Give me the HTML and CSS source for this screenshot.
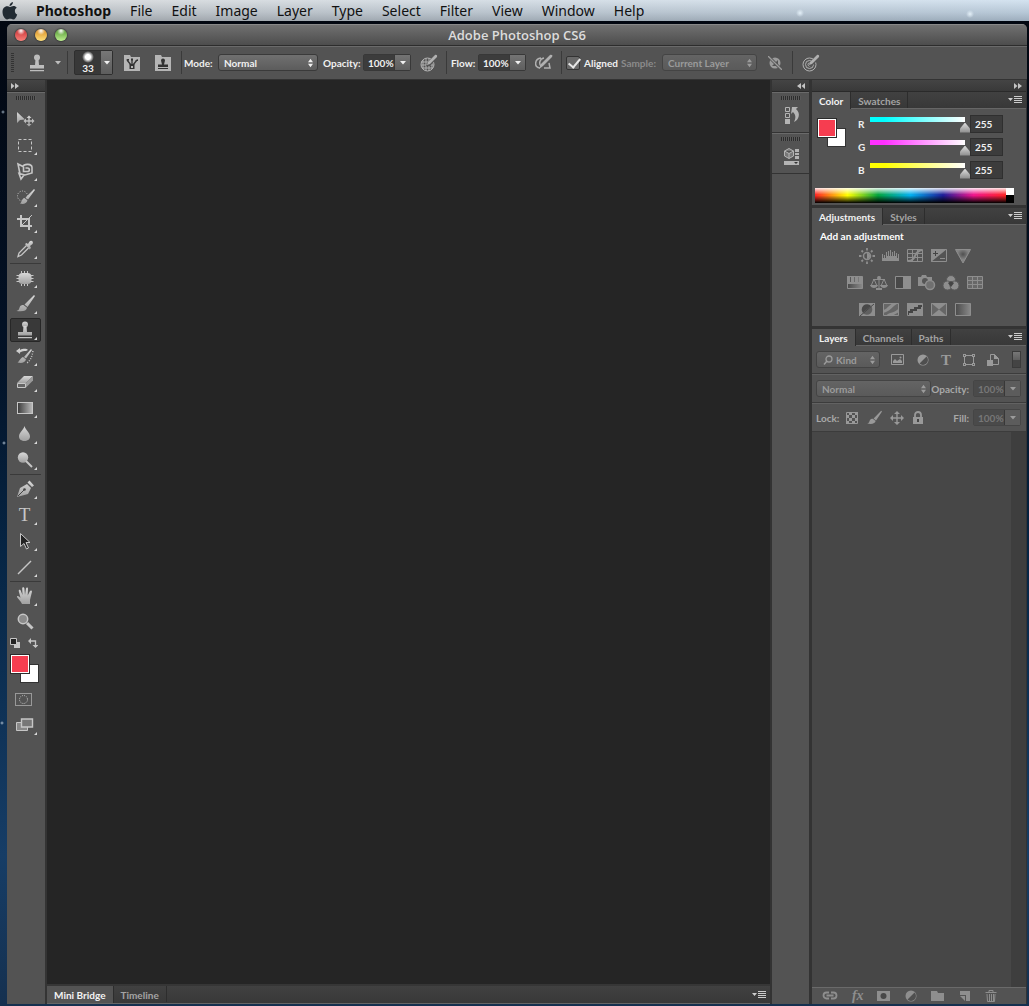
FILE: index.html
```html
<!DOCTYPE html>
<html lang="en">
<head>
    <meta charset="UTF-8">
    <meta name="viewport" content="width=device-width, initial-scale=1.0">
    <title>Adobe Photoshop CS6</title>
    <link rel="stylesheet" href="styles.css">
</head>
<body>
    <!-- shared icons -->
    <svg class="defs" width="0" height="0" aria-hidden="true">
        <defs>
            <linearGradient id="gray" x1="0" y1="0" x2="0" y2="1"><stop offset="0" stop-color="#d8d8d8"/><stop offset="1" stop-color="#a0a0a0"/></linearGradient>
            <linearGradient id="fade" x1="0" x2="1"><stop offset="0" stop-color="#3a3a3a"/><stop offset="1" stop-color="#bbb"/></linearGradient>
            <linearGradient id="dim" x1="0" x2="1"><stop offset="0" stop-color="#4a4a4a"/><stop offset="1" stop-color="#8a8a8a"/></linearGradient>
            <radialGradient id="glow" cx=".5" cy=".35" r=".4"><stop offset="0" stop-color="#505050"/><stop offset="1" stop-color="#858585"/></radialGradient>
            <symbol id="stamp" viewBox="0 0 20 20"><circle cx="10" cy="4.500" r="3"/><path d="M8.500 6h3l.5 6h5v3.500H3V12h5z"/><path d="M3 17h14v1.300H3z"/></symbol>
            <symbol id="brush" viewBox="0 0 20 20"><path d="M19 1l1 1-7.500 11-3-2.500zM8.500 11l3.500 2.800c-.5 3-4 4.200-10.500 3.200 3-1 2.500-2.500 3.500-4.500.8-1.200 2-1.700 3.500-1.500z"/></symbol>
            <symbol id="updown" viewBox="0 0 6 10"><path d="M3 0l3 4H0zM3 10l3-4H0z"/></symbol>
            <symbol id="down" viewBox="0 0 6 4"><path d="M0 0h6L3 3.500z"/></symbol>
            <symbol id="menu" viewBox="0 0 14 8"><path d="M0 2h5L2.500 5zM6 0h8v1H6zM6 2h8v1H6zM6 4h8v1H6zM6 6h8v1H6z"/></symbol>
            <symbol id="forward" viewBox="0 0 8 6"><path d="M0 0l3.500 3L0 6zM4 0l4 3-4 3z"/></symbol>
            <symbol id="back" viewBox="0 0 8 6"><path d="M8 0L4.500 3 8 6zM4 0L0 3l4 3z"/></symbol>
            <symbol id="target" viewBox="0 0 18 18"><g fill="none" stroke="currentColor"><circle cx="7.500" cy="10.500" r="6.500"/><circle cx="7.500" cy="10.500" r="4"/><circle cx="7.500" cy="10.500" r="1.500"/></g><path fill="#535353" d="M7 12l1-4 7-7 3 3-8 8z"/><path d="M7 11l1-3 7-7c1.500-.5 2.500.5 2 2l-7 7z"/></symbol>
            <symbol id="half" viewBox="0 0 12 12"><circle cx="6" cy="6" r="5.500"/><path fill="#4f4f4f" d="M9.500 2.500A4.800 4.800 0 012.500 9.500z"/></symbol>
        </defs>
    </svg>

    <nav class="menubar">
        <a href="#" class="apple" aria-label="Apple"><svg width="16" height="18" viewBox="0 0 16 18"><path d="M11 0c0 2-1.500 4-3.500 4C7.300 2.200 9 .3 11 0zM8 5c1 0 2-1 3.500-1 1.300 0 2.500.6 3.200 1.700-2.700 1.700-2.300 5.500.5 6.700C14.300 15 13 17.500 11.300 17.500c-1.200 0-1.700-.7-3.100-.7-1.500 0-2 .7-3.100.7C3 17.500.5 13.500.5 10 .5 6.500 2.700 4.300 5 4.300c1.300 0 2.200.7 3 .7z"/></svg></a>
        <a href="#" class="app">Photoshop</a>
        <a href="#">File</a>
        <a href="#">Edit</a>
        <a href="#">Image</a>
        <a href="#">Layer</a>
        <a href="#">Type</a>
        <a href="#">Select</a>
        <a href="#">Filter</a>
        <a href="#">View</a>
        <a href="#">Window</a>
        <a href="#">Help</a>
    </nav>

    <div class="window">
        <header class="titlebar">
            <div class="lights">
                <button class="light red" aria-label="Close"></button>
                <button class="light yellow" aria-label="Minimize"></button>
                <button class="light green" aria-label="Zoom"></button>
            </div>
            <h1>Adobe Photoshop CS6</h1>
        </header>

        <div class="options">
            <span class="grip-v"></span>
            <button class="tool-preset" aria-label="Tool preset"><svg width="20" height="20"><use href="#stamp"/></svg><svg width="6" height="4"><use href="#down"/></svg></button>
            <span class="divider"></span>
            <button class="brush-size"><span class="brush-preview"><i></i>33</span><span class="drop"><svg width="6" height="4"><use href="#down"/></svg></span></button>
            <button class="folder" aria-label="Brush panel"><svg width="16" height="16" viewBox="0 0 16 16"><path fill="#b5b5b5" d="M0 0h6l1 2h9v14H0z"/><path fill="none" stroke="#333" stroke-width="1.300" d="M3 5l4 5M8 4v6M13 5L9 10"/><path fill="#333" d="M2 4h3v2zM7 3.500h2v2H7zM11 6l3-2v2zM5.500 9h5v5h-5z"/><path fill="#b5b5b5" d="M7 11h2v2H7z"/></svg></button>
            <button class="folder" aria-label="Clone source panel"><svg width="16" height="16" viewBox="0 0 16 16"><path fill="#b5b5b5" d="M0 0h6l1 2h9v14H0z"/><path fill="#333" d="M6 5.500a2 2 0 014 0L9 9.500h4V12H3V9.500h4zM3 13h10v1H3z"/></svg></button>
            <span class="divider"></span>
            <label class="mode-label" for="mode">Mode:</label>
            <span class="select mode"><select id="mode"><option>Normal</option></select><svg width="6" height="10"><use href="#updown"/></svg></span>
            <label class="opacity-label" for="opacity">Opacity:</label>
            <span class="combo"><input id="opacity" type="text" value="100%"><button aria-label="Opacity slider"><svg width="6" height="4"><use href="#down"/></svg></button></span>
            <button class="pressure" aria-label="Pressure for opacity"><svg width="18" height="18" viewBox="0 0 18 18"><g fill="none" stroke="currentColor"><circle cx="7.500" cy="10.500" r="6.500"/><path d="M3 6v9M6 4v13M9 4v13M12 7v8M1 8h12M1 11h13M2 14h11"/></g><path fill="#535353" d="M6 12l2-4 7-7 3 2-8 9z"/><path d="M7 11l1-3 7-7c1.500-.5 2.500.5 2 2l-7 7z"/></svg></button>
            <span class="divider"></span>
            <label class="flow-label" for="flow">Flow:</label>
            <span class="combo"><input id="flow" type="text" value="100%"><button aria-label="Flow slider"><svg width="6" height="4"><use href="#down"/></svg></button></span>
            <button class="pressure" aria-label="Airbrush"><svg width="18" height="18" viewBox="0 0 18 18"><path fill="none" stroke="currentColor" stroke-width="1.500" d="M6 4C-1 5-1 14 5 14M9 4C4 5 4 10 6 12M14 9l1 5H9"/><path d="M4 15l2-5 9-9c2-.5 3 .5 2 2l-9 9z"/></svg></button>
            <span class="divider"></span>
            <label class="aligned"><input type="checkbox" checked>Aligned</label>
            <label class="sample-label off" for="sample">Sample:</label>
            <span class="select sample off"><select id="sample"><option>Current Layer</option></select><svg width="6" height="10"><use href="#updown"/></svg></span>
            <button class="ignore off" aria-label="Ignore adjustment layers"><svg width="14" height="14" viewBox="0 0 14 14"><circle cx="7" cy="7" r="5.500"/><path fill="#535353" d="M4 10l6-6v6z"/><path stroke="#535353" stroke-width="3" d="M1 1l12 12"/><path stroke="currentColor" stroke-width="1.300" d="M0 0l14 14"/></svg></button>
            <span class="divider"></span>
            <button class="pressure" aria-label="Pressure for size"><svg width="18" height="18"><use href="#target"/></svg></button>
        </div>

        <div class="workspace">
            <aside class="toolbox">
                <button class="collapse" aria-label="Expand tools"><svg width="8" height="6"><use href="#forward"/></svg></button>
                <div class="tools">
                    <span class="grip"></span>
                    <button class="tool single" aria-label="Move"><svg width="20" height="20" viewBox="0 0 20 20"><path d="M2 3v11l3-3 5-.5z"/><path d="M14 6.500l2.500 2.500H14.700v2.300H17V9.500l2.500 2.500-2.500 2.500v-1.800h-2.300V15h1.800L14 17.500 11.500 15h1.800v-2.300H11v1.800L8.500 12 11 9.500v1.800h2.300V9h-1.800z"/></svg></button>
                    <button class="tool" aria-label="Marquee"><svg width="20" height="20" viewBox="0 0 20 20"><rect x="3.500" y="4.500" width="13" height="12" fill="none" stroke="currentColor" stroke-dasharray="3 2"/></svg></button>
                    <button class="tool" aria-label="Lasso"><svg width="20" height="20" viewBox="0 0 20 20"><path fill="none" stroke="currentColor" stroke-width="1.600" d="M5 13L3 3l5 2.500c1-3 9-3 9 1V12l-7 2-6-1.500 2 5.500 3-4M8.500 6v4.500h4c2.500 0 2.500-3.500 0-3.500h-2"/></svg></button>
                    <button class="tool" aria-label="Quick selection"><svg width="20" height="20" viewBox="0 0 20 20"><circle cx="7.500" cy="9" r="5" fill="none" stroke="currentColor" stroke-dasharray="1 1.500"/><path d="M19 2l1 1-7 9.500-2.500-2zM9.500 11l3 2.500c-1 3-4 4-7.500 3 2-1 1.500-5 4.500-5.500z"/></svg></button>
                    <button class="tool" aria-label="Crop"><svg width="20" height="20" viewBox="0 0 20 20"><path fill="none" stroke="currentColor" stroke-width="2" d="M2 6h12v11M6 2v11h11"/><path stroke="currentColor" d="M6 13L17 2"/></svg></button>
                    <button class="tool" aria-label="Eyedropper"><svg width="20" height="20" viewBox="0 0 20 20"><path d="M10 5l1.500-1L13 5l1.500-2.500c2-2 4.500.5 3 2.500L15 7l1 2-1.500 1.500z"/><path fill="none" stroke="currentColor" stroke-width="1.300" d="M11.500 6.500L4 14l-1 3.500L6.500 16 13.500 9"/></svg></button>
                    <hr>
                    <button class="tool" aria-label="Healing brush"><svg width="20" height="20" viewBox="0 0 20 20"><rect x="3.500" y="5" width="13" height="11" rx="4"/><path stroke="currentColor" stroke-dasharray="2 11 2" d="M6.500 3v15M9.500 3v15M12.500 3v15"/><path stroke="currentColor" d="M1.500 7.500h3M1.500 10.500h3M1.500 13.500h3M15.500 7.500h3M15.500 10.500h3M15.500 13.500h3"/></svg></button>
                    <button class="tool" aria-label="Brush"><svg width="20" height="20"><use href="#brush"/></svg></button>
                    <button class="tool active" aria-label="Clone stamp"><svg width="20" height="20"><use href="#stamp"/></svg></button>
                    <button class="tool" aria-label="History brush"><svg width="20" height="20" viewBox="0 0 20 20"><path d="M16 3l1 1-6 8.500-2-1.500zM8 11l3 2.500c-1 3-4 4-8.500 3 2-1 2.500-4.500 5.500-5.500zM1 5l4-3v2c4-2 7-1 8 0l-2 1C9 5 7 5 5 6.500V8z"/><path fill="none" stroke="currentColor" stroke-width="1.500" stroke-dasharray="1 1.500" d="M18 5c-1 5-2 9-6 12"/></svg></button>
                    <button class="tool" aria-label="Eraser"><svg width="20" height="20" viewBox="0 0 20 20"><path d="M9 4h9l-7 7H2z"/><path fill="#999" d="M18 4v4.500l-7 7V11z"/><path fill="#656565" stroke="currentColor" d="M2.500 11.500h8v4h-8z"/></svg></button>
                    <button class="tool" aria-label="Gradient"><svg width="20" height="20" viewBox="0 0 20 20"><rect x="2.500" y="4.500" width="15" height="11" fill="url(#fade)" stroke="currentColor"/></svg></button>
                    <button class="tool" aria-label="Blur"><svg width="20" height="20" viewBox="0 0 20 20"><path d="M9.500 2c1 4 5.500 6.500 5.500 10.500 0 6-11 6-11 0C4 8.500 8.500 6 9.500 2z"/></svg></button>
                    <button class="tool" aria-label="Dodge"><svg width="20" height="20" viewBox="0 0 20 20"><circle cx="8" cy="7.500" r="5.200"/><path stroke="currentColor" stroke-width="2" d="M11 11l6 6"/></svg></button>
                    <hr>
                    <button class="tool" aria-label="Pen"><svg width="20" height="20" viewBox="0 0 20 20"><path d="M2 18L5 9l7-4 4 4-3 6zM12.500 3.500L14.500 1.500l4.500 5-2 1.500z"/><path stroke="#444" d="M3 17l6-6"/><circle cx="9.500" cy="10.500" r="1.300" fill="#444"/></svg></button>
                    <button class="tool type" aria-label="Type">T</button>
                    <button class="tool" aria-label="Path selection"><svg width="20" height="20" viewBox="0 0 20 20"><path fill="#222" stroke="currentColor" d="M5.500 2.500v13l3.500-3 2.500 5.500 2-1-2.500-5.500h4z"/></svg></button>
                    <button class="tool" aria-label="Line"><svg width="20" height="20" viewBox="0 0 20 20"><path stroke="currentColor" stroke-width="1.500" d="M3 17L16 4"/></svg></button>
                    <hr>
                    <button class="tool" aria-label="Hand"><svg width="20" height="20" viewBox="0 0 20 20"><path d="M7 18c-1-3-4-5-5-7 0-2 2-1 3.500.8L3.700 5c0-1.700 1.800-1.700 2.200 0L7.500 9 7.200 2.500c0-1.600 2-1.600 2.200 0L10 9l1-6.500c.4-1.400 2-1.200 2 .3L12.700 9.500 15 5c.8-1.200 2.400-.4 1.900 1L15 14v4z"/></svg></button>
                    <button class="tool single" aria-label="Zoom"><svg width="20" height="20" viewBox="0 0 20 20"><circle cx="8" cy="7" r="4.700" fill="#8b8b8b" stroke="currentColor" stroke-width="1.500"/><path stroke="currentColor" stroke-width="3" d="M12 11l5.500 5.500"/></svg></button>
                    <div class="swap">
                        <button aria-label="Default colors"><svg width="10" height="10" viewBox="0 0 10 10"><path d="M4 4h6v6H4z"/><path fill="#222" stroke="currentColor" d="M.5.500h6v6h-6z"/></svg></button>
                        <button aria-label="Swap colors"><svg width="10" height="10" viewBox="0 0 10 10"><path d="M0 3l3-3v6zM4.500 7h6l-3 3z"/><path fill="none" stroke="currentColor" stroke-width="1.300" d="M2 3h5.500v5"/></svg></button>
                    </div>
                    <div class="colors"><button class="fore" aria-label="Foreground color"></button><button class="back" aria-label="Background color"></button></div>
                    <button class="tool single mask" aria-label="Quick mask"><svg width="18" height="14" viewBox="0 0 18 14"><rect x=".5" y=".5" width="16" height="12" fill="none" stroke="#999"/><circle cx="8.500" cy="6.500" r="4" fill="none" stroke="currentColor" stroke-dasharray="1 1.100"/></svg></button>
                    <button class="tool" aria-label="Screen mode"><svg width="20" height="20" viewBox="0 0 20 20"><path fill="#888" stroke="currentColor" d="M1.500 7.500h11v8h-11z"/><path fill="#777" stroke="currentColor" stroke-width="1.400" d="M6.500 4h11v8h-11z"/></svg></button>
                </div>
            </aside>

            <main class="document">
                <div class="canvas"></div>
                <div class="tabs">
                    <button class="tab on">Mini Bridge</button>
                    <button class="tab">Timeline</button>
                    <button class="panel-menu" aria-label="Panel menu"><svg width="14" height="8"><use href="#menu"/></svg></button>
                </div>
            </main>

            <aside class="dock">
                <button class="collapse end" aria-label="Expand panels"><svg width="8" height="6"><use href="#back"/></svg></button>
                <div class="dock-item"><span class="grip"></span><button aria-label="History"><svg width="18" height="20" viewBox="0 0 18 20"><path fill="none" stroke="currentColor" d="M2.500 2.500h4v4h-4zM2.500 8.500h4v4h-4z"/><path d="M2 14h5v5H2zM9 2h6l-2 2c5 4 3 11-2 13 2-4 2-7-1-10L8 9z"/></svg></button></div>
                <div class="dock-item"><span class="grip"></span><button aria-label="Properties"><svg width="18" height="20" viewBox="0 0 18 20"><path fill="#777" stroke="currentColor" d="M1.500 5l4.500-2.500L10.500 5v5L6 12.500 1.500 10zM1.500 5L6 7.500 10.500 5M6 7.500v5"/><path d="M12 3h4v3h-4zM12 7h4v2h-4zM12 10h4v3h-4zM1 15h15v4H1z"/><path fill="#333" d="M11 16h4l-2 2z"/></svg></button></div>
            </aside>

            <aside class="panels">
                <button class="collapse end" aria-label="Collapse panels"><svg width="8" height="6"><use href="#forward"/></svg></button>

                <section class="panel">
                    <div class="tabs">
                        <button class="tab on">Color</button>
                        <button class="tab">Swatches</button>
                        <button class="panel-menu" aria-label="Panel menu"><svg width="14" height="8"><use href="#menu"/></svg></button>
                    </div>
                    <div class="color">
                        <div class="mixer">
                            <div class="colors"><button class="fore" aria-label="Foreground color"></button><button class="back" aria-label="Background color"></button></div>
                            <div class="channels">
                                <div class="channel"><label for="r">R</label><input id="r" class="red-track" type="range" max="255" value="255"><input type="text" value="255" aria-label="Red"></div>
                                <div class="channel"><label for="g">G</label><input id="g" class="green-track" type="range" max="255" value="255"><input type="text" value="255" aria-label="Green"></div>
                                <div class="channel"><label for="b">B</label><input id="b" class="blue-track" type="range" max="255" value="255"><input type="text" value="255" aria-label="Blue"></div>
                            </div>
                        </div>
                        <div class="spectrum"><span class="rainbow"></span><span class="bw"></span></div>
                    </div>
                </section>

                <section class="panel">
                    <div class="tabs">
                        <button class="tab on">Adjustments</button>
                        <button class="tab">Styles</button>
                        <button class="panel-menu" aria-label="Panel menu"><svg width="14" height="8"><use href="#menu"/></svg></button>
                    </div>
                    <div class="adjustments">
                        <h2>Add an adjustment</h2>
                        <div class="adj-row">
                            <button aria-label="Brightness"><svg width="18" height="16" viewBox="0 0 18 16"><circle cx="9" cy="8" r="3.500" fill="none" stroke="currentColor" stroke-width="1.500"/><path d="M9 5a3 3 0 010 6z"/><path stroke="currentColor" stroke-width="1.800" d="M9 0v2.500M9 13.500V16M1 8h2.500M14.500 8H17M3.500 2.500L5 4M13 12l1.500 1.500M3.500 13.500L5 12M13 4l1.500-1.500"/></svg></button>
                            <button aria-label="Levels"><svg width="18" height="16" viewBox="0 0 18 16"><path d="M0 13V6h1v4h1V7h1v3h1V4h1v4h1V3h1v5h1V2h1v6h1V4h1v4h1V3h1v5h1V5h1v5h1V6h1v7z"/></svg></button>
                            <button aria-label="Curves"><svg width="18" height="16" viewBox="0 0 18 16"><path fill="none" stroke="currentColor" d="M1.500 1.500h15v12h-15zM6.500 1v13M11.500 1v13M1 5.500h16M1 9.500h16"/><path fill="none" stroke="currentColor" stroke-width="2" d="M2 13c9 0 5-10 14-11"/></svg></button>
                            <button aria-label="Exposure"><svg width="18" height="16" viewBox="0 0 18 16"><path fill="none" stroke="currentColor" d="M1.500 1.500h15v12h-15z"/><path d="M1 1h16L1 14z"/><path stroke="#444" d="M3 5.500h5M5.500 3v5"/><path stroke="currentColor" d="M10 10.500h5"/></svg></button>
                            <button aria-label="Vibrance"><svg width="18" height="16" viewBox="0 0 18 16"><path fill="url(#glow)" stroke="currentColor" d="M1.500 1.500h15L9 15z"/></svg></button>
                        </div>
                        <div class="adj-row">
                            <button aria-label="Hue/Saturation"><svg width="18" height="16" viewBox="0 0 18 16"><path fill="url(#dim)" stroke="currentColor" d="M1.500 1.500h15v12h-15z"/><path d="M1 1h3v6H1zM5 1h3v6H5zM9 1h3v6H9zM13 1h3v6h-3zM1 7h16v2H1z"/></svg></button>
                            <button aria-label="Color balance"><svg width="18" height="16" viewBox="0 0 18 16"><path fill="none" stroke="currentColor" d="M9 1v12M3 4.500h12M4 4l-3 7M4 4l3 7M14 4l-3 7M14 4l3 7"/><path d="M0 10h8c-1 4-7 4-8 0zM10 10h8c-1 4-7 4-8 0zM6 13h6v2H6z"/><circle cx="9" cy="3" r="2"/></svg></button>
                            <button aria-label="Black and white"><svg width="18" height="16" viewBox="0 0 18 16"><path fill="#484848" stroke="currentColor" d="M1.500 1.500h15v12h-15z"/><path d="M9 1h8v13H9z"/></svg></button>
                            <button aria-label="Photo filter"><svg width="18" height="16" viewBox="0 0 18 16"><path d="M0 2h3l1-2h4l1 2h5v9H0z"/><circle cx="7" cy="6" r="3" fill="#555"/><circle cx="12" cy="10" r="4.500" fill="#707070" stroke="currentColor" stroke-width="1.500"/></svg></button>
                            <button aria-label="Channel mixer"><svg width="18" height="16" viewBox="0 0 18 16"><g stroke="#5b5b5b"><circle cx="9" cy="5" r="4.500"/><circle cx="5.500" cy="10.500" r="4.500"/><circle cx="12.500" cy="10.500" r="4.500"/></g><path fill="#444" d="M9 6l3 2-3 4-3-4z"/></svg></button>
                            <button aria-label="Color lookup"><svg width="18" height="16" viewBox="0 0 18 16"><path fill="#686868" stroke="currentColor" d="M1.500 1.500h15v12h-15zM6.500 1v13M11.500 1v13M1 5.500h16M1 9.500h16"/></svg></button>
                        </div>
                        <div class="adj-row">
                            <button aria-label="Invert"><svg width="18" height="16" viewBox="0 0 18 16"><path d="M1 1h16v13H1z"/><path fill="#484848" d="M13 4A5 5 0 005 11z"/><path fill="#606060" d="M13 4a5 5 0 01-8 7z"/><path stroke="#484848" d="M2 14L16 2"/></svg></button>
                            <button aria-label="Posterize"><svg width="18" height="16" viewBox="0 0 18 16"><path fill="#666" stroke="currentColor" d="M1.500 1.500h15v12h-15z"/><path d="M1 8c5-1 6-6 11-7h5c-6 2-9 9-16 10zM4 14c2-4 10-3 13-8v4l-7 4z"/></svg></button>
                            <button aria-label="Threshold"><svg width="18" height="16" viewBox="0 0 18 16"><path fill="#444" stroke="currentColor" d="M1.500 1.500h15v12h-15z"/><path d="M1 1h15v2h-4v2H8v2H4v2H1zM3 14v-3h4V9h4V7h4V5h2v9z"/></svg></button>
                            <button aria-label="Selective color"><svg width="18" height="16" viewBox="0 0 18 16"><path fill="#666" stroke="currentColor" d="M1.500 1.500h15v12h-15z"/><path d="M1 1h16L9 7.500zM1 14h16L9 7.500z"/></svg></button>
                            <button aria-label="Gradient map"><svg width="18" height="16" viewBox="0 0 18 16"><path fill="url(#dim)" stroke="currentColor" d="M1.500 1.500h15v12h-15z"/></svg></button>
                        </div>
                    </div>
                </section>

                <section class="panel layers">
                    <div class="tabs">
                        <button class="tab on">Layers</button>
                        <button class="tab">Channels</button>
                        <button class="tab">Paths</button>
                        <button class="panel-menu" aria-label="Panel menu"><svg width="14" height="8"><use href="#menu"/></svg></button>
                    </div>
                    <div class="layer-row">
                        <span class="select kind off"><svg class="search" width="10" height="10" viewBox="0 0 10 10"><circle cx="6" cy="4" r="3" fill="none" stroke="currentColor" stroke-width="1.300"/><path stroke="currentColor" stroke-width="1.500" d="M4 6L1 9.500"/></svg><select aria-label="Filter kind"><option>Kind</option></select><svg width="6" height="10"><use href="#updown"/></svg></span>
                        <div class="filters">
                            <button aria-label="Pixel layers"><svg width="14" height="12" viewBox="0 0 14 12"><path fill="none" stroke="currentColor" d="M.5.500h12v10H.5z"/><path d="M2 9V7l2-2 2 2 3-2 2 2v2z"/><circle cx="9.500" cy="3.500" r="1"/></svg></button>
                            <button aria-label="Adjustment layers"><svg width="12" height="12"><use href="#half"/></svg></button>
                            <button class="type-filter" aria-label="Type layers">T</button>
                            <button aria-label="Shape layers"><svg width="12" height="12" viewBox="0 0 12 12"><path fill="none" stroke="currentColor" d="M1.500 1.500h9v9h-9z"/><path d="M0 0h3v3H0zM9 0h3v3H9zM0 9h3v3H0zM9 9h3v3H9z"/><path fill="#535353" d="M1 1h1v1H1zM10 1h1v1h-1zM1 10h1v1H1zM10 10h1v1h-1z"/></svg></button>
                            <button aria-label="Smart objects"><svg width="12" height="14" viewBox="0 0 12 14"><path fill="none" stroke="currentColor" d="M3.500 7V1.500h4l4 4v6H6"/><path d="M0 7h6v6H0zM7 1v5h5z"/></svg></button>
                        </div>
                        <button class="switch" aria-label="Filter switch"></button>
                    </div>
                    <div class="layer-row">
                        <span class="select blend off"><select aria-label="Blend mode"><option>Normal</option></select><svg width="6" height="10"><use href="#updown"/></svg></span>
                        <label class="push" for="layer-opacity">Opacity:</label>
                        <span class="combo off"><input id="layer-opacity" type="text" value="100%" disabled><button aria-label="Opacity slider"><svg width="6" height="4"><use href="#down"/></svg></button></span>
                    </div>
                    <div class="layer-row">
                        <span>Lock:</span>
                        <div class="locks">
                            <button aria-label="Lock transparency"><svg width="12" height="12" viewBox="0 0 12 12"><path fill="none" stroke="currentColor" d="M.5.500h11v11H.5z"/><path d="M3 0h3v3H3zM9 0h3v3H9zM0 3h3v3H0zM6 3h3v3H6zM3 6h3v3H3zM9 6h3v3H9zM0 9h3v3H0zM6 9h3v3H6z"/></svg></button>
                            <button aria-label="Lock pixels"><svg width="16" height="16"><use href="#brush"/></svg></button>
                            <button aria-label="Lock position"><svg width="14" height="14" viewBox="0 0 14 14"><path d="M7 0l3 3H7.700v3.300H11V4l3 3-3 3V7.700H7.700V11H10l-3 3-3-3h2.300V7.700H3V10L0 7l3-3v2.300h3.300V3H4z"/></svg></button>
                            <button aria-label="Lock all"><svg width="12" height="14" viewBox="0 0 12 14"><path fill="none" stroke="currentColor" stroke-width="1.800" d="M3 7V4c0-4 6-4 6 0v3"/><path d="M1 6h10v7H1z"/><path fill="#444" d="M5 8h2v3H5z"/></svg></button>
                        </div>
                        <label class="push" for="fill">Fill:</label>
                        <span class="combo off"><input id="fill" type="text" value="100%" disabled><button aria-label="Fill slider"><svg width="6" height="4"><use href="#down"/></svg></button></span>
                    </div>
                    <div class="layer-list"></div>
                    <footer class="layer-actions">
                        <button aria-label="Link layers"><svg width="16" height="12" viewBox="0 0 16 12"><path fill="none" stroke="currentColor" stroke-width="1.800" d="M7 8.500H4.500a2.500 2.500 0 010-6H7M9 2.500h2.500a2.500 2.500 0 010 6H9M4.500 5.500h7"/></svg></button>
                        <button class="fx" aria-label="Layer style">fx</button>
                        <button aria-label="Add mask"><svg width="14" height="12" viewBox="0 0 14 12"><path d="M0 1h13v10H0z"/><circle cx="6.500" cy="6" r="3" fill="#484848"/></svg></button>
                        <button aria-label="New adjustment layer"><svg width="12" height="12"><use href="#half"/></svg></button>
                        <button aria-label="New group"><svg width="14" height="12" viewBox="0 0 14 12"><path d="M0 1h6l1 2h6v8H0z"/></svg></button>
                        <button aria-label="New layer"><svg width="12" height="12" viewBox="0 0 12 12"><path d="M1 1h10v10H7V5H1z"/><path d="M1 6h5v5z"/></svg></button>
                        <button aria-label="Delete layer"><svg width="12" height="12" viewBox="0 0 12 12"><path fill="none" stroke="currentColor" d="M.5 2.500h11M4 2V.500h4V2M2 4l.5 7.500h7L10 4M4.500 4v7M6.500 4v7M8.500 4v7"/></svg></button>
                    </footer>
                </section>
            </aside>
        </div>
    </div>
</body>
</html>
```

FILE: styles.css
```css
* {
    box-sizing: border-box;
}
body {
    display: flex;
    flex-direction: column;
    height: 100vh;
    margin: 0;
    overflow: hidden;
    font-family: Lato, "Open Sans", sans-serif;
    font-size: 10px;
    font-weight: 700;
    line-height: 14px;
    color: #f0f0f0;
    background:
        radial-gradient(circle at 3px 112px, #9ab 0, transparent 2px),
        radial-gradient(circle at 4px 443px, #abc 0, transparent 2px),
        radial-gradient(circle at 2px 723px, #abc 0, transparent 2px),
        linear-gradient(#02060f, #031226 35%, #062544 55%, #163d66 85%, #15304f);
}
button, input, select {
    font: inherit;
    color: inherit;
    margin: 0;
}
button {
    display: flex;
    align-items: center;
    justify-content: center;
    padding: 0;
    border: none;
    background: none;
}
svg {
    display: block;
    flex: none;
    fill: currentColor;
}
.defs {
    position: absolute;
}

/* menu bar */
.menubar {
    display: flex;
    align-items: center;
    flex: none;
    gap: 19px;
    height: 21px;
    margin-bottom: 3px;
    font-family: "Noto Sans", "Open Sans", sans-serif;
    font-size: 14px;
    font-weight: 400;
    line-height: 20px;
    background:
        radial-gradient(circle at 800px 13px, #e4f0f8 0, transparent 4px),
        radial-gradient(circle at 970px 14px, #e4f0f8 0, transparent 4px),
        linear-gradient(90deg, rgba(190, 190, 190, 0.5), rgba(180, 205, 228, 0.5)),
        linear-gradient(#f4f8fb, #b9c1c8 60%, #858d95);
}
.menubar a {
    color: #111;
    text-decoration: none;
}
.menubar .apple {
    width: 17px;
    padding-left: 2px;
    color: #222b33;
}
.menubar .app {
    font-weight: 700;
}

/* window */
.window {
    display: flex;
    flex: 1;
    flex-direction: column;
    min-height: 0;
    margin: 0 2px 2px 7px;
    overflow: hidden;
    border-radius: 5px 5px 0 0;
    background: #535353;
}
.titlebar {
    display: grid;
    grid-template-columns: 1fr auto 1fr;
    align-items: center;
    flex: none;
    height: 22px;
    padding: 0 8px;
    border-top: 1px solid #888;
    border-bottom: 1px solid #2d2d2d;
    background: linear-gradient(#707070, #4d4d4d);
}
.titlebar h1 {
    margin: 0;
    font-family: "Open Sans", sans-serif;
    font-size: 13px;
    font-weight: 600;
    line-height: 18px;
    color: #dcdcdc;
}
.lights {
    display: flex;
    gap: 8px;
}
.light {
    width: 12px;
    height: 12px;
    border-radius: 50%;
    box-shadow: 0 0 1px 1px rgba(30, 30, 30, 0.4);
}
.light.red {
    background: radial-gradient(circle at 50% 15%, #fff 0, transparent 35%), linear-gradient(#c52f32, #f9817a);
}
.light.yellow {
    background: radial-gradient(circle at 50% 15%, #fff 0, transparent 35%), linear-gradient(#d88a22, #ffe07a);
}
.light.green {
    background: radial-gradient(circle at 50% 15%, #fff 0, transparent 35%), linear-gradient(#4f9330, #bdf08f);
}

/* options bar */
.options {
    display: flex;
    align-items: center;
    flex: none;
    height: 34px;
    padding: 0 0 1px 4px;
    border-top: 1px solid #6a6a6a;
    border-bottom: 1px solid #333;
}
.options > * {
    flex: none;
}
.options > .divider {
    width: 1px;
    height: 23px;
    background: #3a3a3a;
}
.grip-v {
    width: 3px;
    height: 20px;
    background: repeating-linear-gradient(#333 0 1px, #535353 1px 2px);
}
.grip {
    display: block;
    width: 20px;
    height: 4px;
    margin: 0 auto;
    background: repeating-linear-gradient(90deg, #2d2d2d 0 1px, #5a5a5a 1px 2px);
}
.tool-preset {
    gap: 8px;
    width: 53px;
    padding-left: 7px;
    color: #bdbdbd;
}
.brush-size {
    width: 39px;
    height: 25px;
    margin: 0 11px 0 6px;
    border: 1px solid #2e2e2e;
    border-radius: 2px;
    background: #383838;
}
.brush-preview {
    display: flex;
    flex: 1;
    flex-direction: column;
    align-items: center;
    line-height: 11px;
}
.brush-preview i {
    width: 12px;
    height: 12px;
    border-radius: 50%;
    background: radial-gradient(#fff 30%, transparent 70%);
}
.drop {
    display: flex;
    align-items: center;
    justify-content: center;
    width: 11px;
    height: 100%;
    background: linear-gradient(#777, #5d5d5d);
}
.folder {
    width: 16px;
    margin-right: 15px;
}
.folder + .folder {
    margin-right: 10px;
}
.mode-label {
    width: 36px;
    padding-left: 2px;
}
.opacity-label {
    width: 45px;
    padding-left: 5px;
}
.flow-label {
    width: 31px;
    padding-left: 4px;
}
.sample-label {
    width: 41px;
}
.select {
    position: relative;
    display: flex;
    align-items: center;
    flex: none;
    height: 17px;
    border: 1px solid #3a3a3a;
    border-radius: 3px;
    background: linear-gradient(#707070, #5c5c5c);
}
.select select {
    width: 100%;
    padding: 0 14px 0 5px;
    border: none;
    appearance: none;
    background: none;
}
.select select + svg {
    position: absolute;
    right: 4px;
    width: 5px;
}
.select.mode {
    width: 100px;
}
.select.sample {
    width: 95px;
}
.off {
    color: #9b9b9b;
}
.sample-label.off {
    color: #8b8b8b;
}
.select.off {
    border-color: #444;
    background: linear-gradient(#646464, #5a5a5a);
}
.combo {
    display: flex;
    width: 48px;
    height: 17px;
    border: 1px solid #383838;
    border-radius: 2px;
}
.combo input {
    flex: 1;
    width: 0;
    padding: 0 0 0 4px;
    border: none;
    background: #3c3c3c;
}
.combo button {
    width: 16px;
    border-left: 1px solid #383838;
    background: linear-gradient(#747474, #5e5e5e);
}
.combo.off {
    border-color: #454545;
}
.combo.off input {
    color: #777;
    background: #4a4a4a;
}
.combo.off button {
    background: #5c5c5c;
}
.pressure {
    width: 18px;
    margin: 0 8px 0 9px;
    color: #b0b0b0;
}
.aligned {
    display: flex;
    align-items: center;
    gap: 4px;
    width: 59px;
    padding-left: 4px;
}
.aligned input {
    flex: none;
    width: 14px;
    height: 14px;
    border: 1px solid #333;
    border-radius: 2px;
    appearance: none;
    background: #686868;
}
.aligned input:checked::before {
    content: "";
    display: block;
    width: 5px;
    height: 10px;
    margin: -1px 0 0 4px;
    border: solid #e6e6e6;
    border-width: 0 2px 2px 0;
    transform: rotate(40deg);
}
.ignore {
    width: 14px;
    margin: 0 10px 0 11px;
}

/* columns under the options bar */
.workspace {
    display: flex;
    flex: 1;
    min-height: 0;
}
.collapse {
    justify-content: flex-start;
    flex: none;
    width: 100%;
    height: 12px;
    padding: 0 4px;
    border-bottom: 1px solid #2a2a2a;
    color: #c4c4c4;
    background: linear-gradient(#444, #393939);
}
.collapse.end {
    justify-content: flex-end;
}
.toolbox {
    flex: none;
    width: 40px;
    border-right: 2px solid #343434;
}
.tools {
    padding: 3px 4px 0 3px;
    border-top: 1px solid #6a6a6a;
}
.tools > .grip {
    margin-bottom: 6px;
}
.tool {
    position: relative;
    width: 31px;
    height: 26px;
    padding-right: 2px;
    color: #c6c6c6;
}
.tool svg {
    fill: url(#gray);
}
.tool::after {
    content: "";
    position: absolute;
    right: 4px;
    bottom: 3px;
    border-left: 3px solid transparent;
    border-bottom: 3px solid #d8d8d8;
}
.tool.single::after {
    display: none;
}
.tool.active {
    height: 24px;
    margin: 1px 0;
    border: 1px solid #272727;
    border-radius: 2px;
    background: #393939;
}
.tool.active::after {
    right: 3px;
    bottom: 1px;
}
.tool.type {
    font-family: "Liberation Serif", serif;
    font-size: 19px;
    font-weight: 400;
}
.tools hr {
    height: 1px;
    margin: 1px 0;
    border: none;
    background: #3a3a3a;
}
.swap {
    display: flex;
    justify-content: space-between;
    width: 28px;
    margin: 3px 0 7px;
    color: #c6c6c6;
}
.colors {
    display: grid;
    flex: none;
    grid-template-columns: 9px 9px 10px;
    grid-template-rows: 9px 9px 10px;
}
.colors .fore {
    z-index: 1;
    grid-area: 1 / 1 / 3 / 3;
    border: 1px solid #fff;
    outline: 1px solid #2b2b2b;
    background: #f63d50;
}
.colors .back {
    grid-area: 2 / 2 / 4 / 4;
    border: 1px solid #333;
    background: #fff;
}
.tools .colors {
    margin: 0 0 5px 1px;
}
.tool.mask {
    width: 29px;
    height: 24px;
}

.document {
    display: flex;
    flex: 1;
    flex-direction: column;
    min-width: 0;
    background: #252525;
}
.canvas {
    flex: 1;
}
.tabs {
    display: flex;
    align-items: stretch;
    flex: none;
    height: 17px;
    border-bottom: 1px solid #666;
    background: linear-gradient(#414141, #383838);
}
.tab {
    height: 16px;
    padding: 1px 7px 0;
    border-right: 1px solid #2d2d2d;
    color: #a4a4a4;
}
.tab.on {
    height: 17px;
    padding-top: 0;
    color: #f2f2f2;
    background: #535353;
}
.panel-menu {
    margin-left: auto;
    padding-right: 4px;
    color: #ccc;
}
.document .tabs {
    height: 20px;
    border-top: 2px solid #363636;
}

.dock {
    flex: none;
    width: 41px;
    border: solid #333;
    border-width: 0 2px;
}
.dock-item {
    height: 41px;
    padding-top: 3px;
    border-top: 1px solid #6a6a6a;
    border-bottom: 1px solid #333;
}
.dock-item button {
    width: 100%;
    margin-top: 5px;
    padding-left: 2px;
    color: #b4b4b4;
}

.panels {
    display: flex;
    flex: none;
    flex-direction: column;
    width: 216px;
    border-left: 1px solid #333;
    border-right: 1px solid #333;
}
.panel {
    border-bottom: 3px solid #343434;
}
.color {
    height: 96px;
    padding: 6px 4px 0 3px;
}
.mixer {
    display: flex;
    gap: 12px;
    padding-left: 3px;
}
.mixer .colors {
    margin-top: 4px;
}
.channels {
    flex: 1;
}
.channel {
    display: flex;
    align-items: flex-start;
    height: 23px;
}
.channel label {
    width: 7px;
    padding-top: 3px;
    line-height: 12px;
}
.channel input[type=range] {
    width: 105px;
    height: 18px;
    appearance: none;
    background: none;
}
.channel input[type=range]::-webkit-slider-runnable-track {
    height: 17px;
    background: linear-gradient(90deg, var(--tint) 15%, #fff) 5px 1px / calc(100% - 10px) 5px no-repeat;
}
.channel input[type=range]::-webkit-slider-thumb {
    width: 10px;
    height: 10px;
    margin-top: 7px;
    appearance: none;
    clip-path: polygon(50% 0, 100% 60%, 100% 100%, 0 100%, 0 60%);
    background: linear-gradient(#ddd, #8a8a8a);
}
.red-track {
    --tint: #0ff;
}
.green-track {
    --tint: #ff30ff;
}
.blue-track {
    --tint: #ff0;
}
.channel input[type=text] {
    width: 33px;
    height: 18px;
    padding: 0 4px;
    border: 1px solid #2f2f2f;
    background: #3c3c3c;
}
.spectrum {
    display: flex;
    width: 199px;
    height: 15px;
    margin-top: 4px;
}
.rainbow {
    flex: 1;
    background:
        linear-gradient(rgba(255, 255, 255, 0.9), transparent 45%, transparent 50%, #000),
        linear-gradient(90deg, #f22, #ff0 17%, #00a33c 33%, #00b0f0 50%, #1c1c96 67%, #f0148c 83%, #f22);
}
.bw {
    width: 8px;
    background: linear-gradient(#fff 50%, #000 50%);
}

.adjustments {
    height: 101px;
    padding: 4px 8px 0;
}
.adjustments h2 {
    margin: 0 0 5px;
    font-size: 10px;
    line-height: 14px;
    color: #fff;
}
.adj-row {
    display: flex;
    justify-content: center;
    gap: 6px;
    margin: 0 8px 11px 0;
    color: #8e8e8e;
}

.layers {
    display: flex;
    flex: 1;
    flex-direction: column;
    min-height: 0;
    border-bottom: none;
}
.layer-row {
    display: flex;
    align-items: center;
    flex: none;
    height: 28px;
    padding: 0 5px 0 4px;
    border-bottom: 1px solid #3c3c3c;
    color: #a8a8a8;
}
.layer-row + .layer-row {
    height: 29px;
    border-top: 1px solid #626262;
}
.select.kind {
    width: 64px;
}
.kind .search {
    margin-left: 6px;
}
.kind select {
    padding-left: 3px;
}
.select.blend {
    width: 115px;
}
.filters {
    display: flex;
    flex: 1;
    align-items: center;
    justify-content: space-between;
    margin: 0 13px 0 11px;
    color: #9a9a9a;
}
.type-filter {
    font-family: "Liberation Serif", serif;
    font-size: 15px;
}
.switch {
    width: 9px;
    height: 17px;
    border: 1px solid #3a3a3a;
    background: linear-gradient(#777, #606060 50%, #444 50%);
}
.locks {
    display: flex;
    align-items: center;
    gap: 8px;
    margin-left: 7px;
    color: #999;
}
.push {
    margin: 0 4px 0 auto;
}
.layer-list {
    flex: 1;
    border-right: 15px solid #3e3e3e;
    background: #474747;
}
.layer-actions {
    display: flex;
    align-items: center;
    justify-content: space-between;
    flex: none;
    height: 17px;
    padding: 0 29px 0 10px;
    border-top: 1px solid #6a6a6a;
    color: #8e8e8e;
}
.fx {
    font-family: "Liberation Serif", serif;
    font-size: 14px;
    font-style: italic;
}
```
